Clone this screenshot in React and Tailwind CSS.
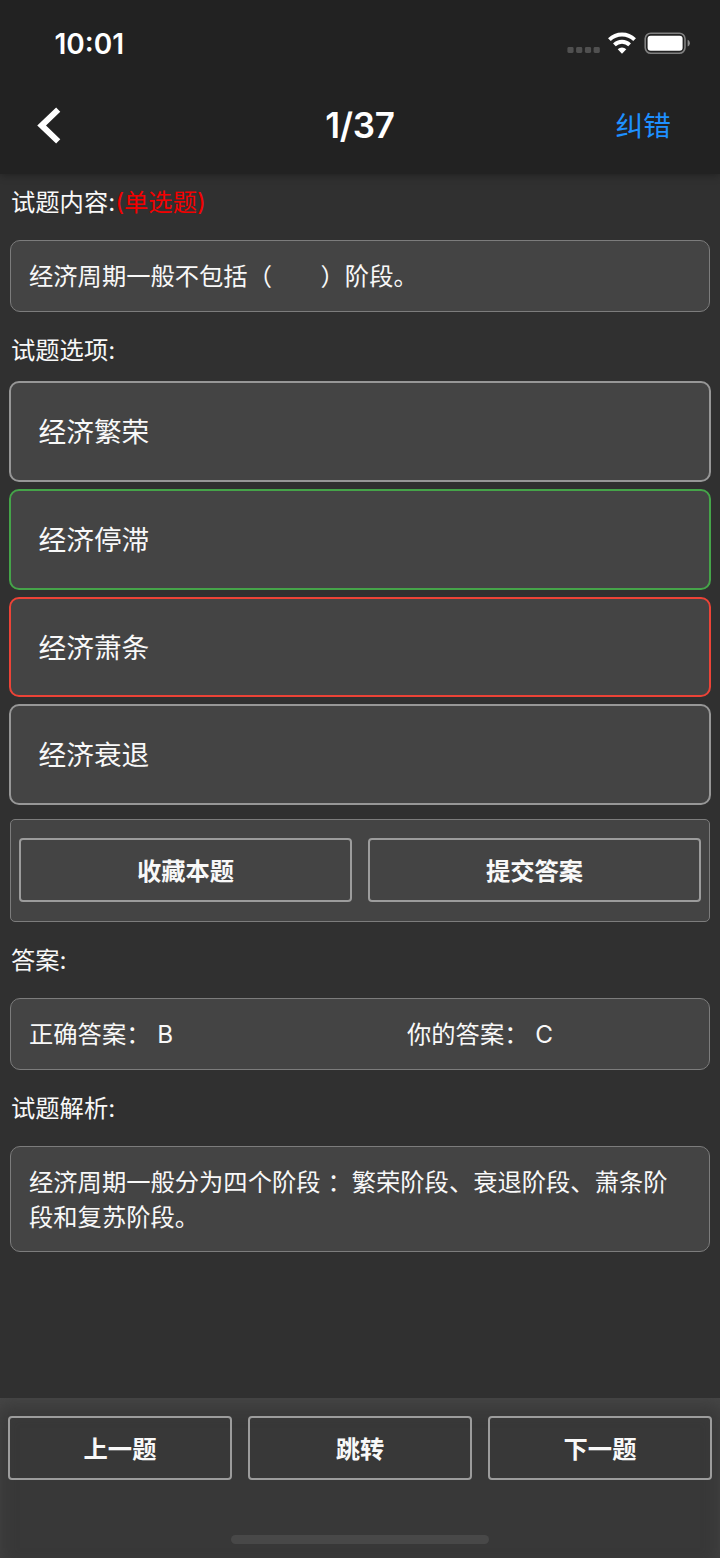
import { clsx } from 'clsx';

const options = [
    { id: 'A', text: '经济繁荣' },
    { id: 'B', text: '经济停滞' },
    { id: 'C', text: '经济萧条' },
    { id: 'D', text: '经济衰退' },
];

const correctAnswer = 'B';
const userAnswer = 'C';

function StatusBar() {
    return (
        <div className="flex h-[78px] items-start justify-between pr-[30px] pl-[54.5px]">
            <span className="mt-[24px] text-[28px] leading-[40px] font-semibold">10:01</span>
            <svg className="mt-[30px]" width="124" height="26" viewBox="0 0 124 26" fill="none">
                {/* No signal */}
                <g fill="#505050">
                    <rect x="1.4" y="17" width="6.2" height="6" rx="1.4" />
                    <rect x="10.1" y="17" width="6.2" height="6" rx="1.4" />
                    <rect x="18.9" y="17" width="6.2" height="6" rx="1.4" />
                    <rect x="27.6" y="17" width="6.2" height="6" rx="1.4" />
                </g>
                {/* Wifi */}
                <g stroke="#fff" strokeWidth="3.9">
                    <path d="M43.4 9.6a18.2 18.2 0 0 1 25.2 0" />
                    <path d="M48.4 14.9a10.9 10.9 0 0 1 15.2 0" />
                </g>
                <path d="M56 23.8l-4.3-4.6a6.2 6.2 0 0 1 8.6 0z" fill="#fff" />
                {/* Battery */}
                <rect x="79.2" y="3.2" width="39.8" height="20" rx="5.6" stroke="#808080" strokeWidth="1.6" />
                <rect x="81.6" y="5.8" width="35" height="15" rx="3" fill="#fff" />
                <path d="M121.6 9.8c3 1.2 3 5.6 0 6.8z" fill="#8c8c8c" />
            </svg>
        </div>
    );
}

function Label({ children, className }) {
    return <div className={clsx('pl-[11px] leading-[36px]', className)}>{children}</div>;
}

function Card({ children, className }) {
    return (
        <div className={clsx('mx-[10px] border-[1.5px] border-[#7c7c7c] bg-[#444444]', className)}>
            {children}
        </div>
    );
}

function OutlineButton({ children }) {
    return (
        <button className="h-[64px] flex-1 rounded-[4px] border-2 border-[#9c9c9c] pt-[2px] text-center font-bold">
            {children}
        </button>
    );
}

export default function App() {
    return (
        <div
            lang="zh-CN"
            className="flex h-[1558px] w-[720px] flex-col overflow-hidden bg-[#303030] font-['Inter','Noto_Sans_CJK_SC',sans-serif] text-[24.3px] text-[#f8f8f8]"
        >
            <header className="h-[174px] shrink-0 bg-[#222222] text-white shadow-[0_1px_8px_rgba(0,0,0,0.35)]">
                <StatusBar />
                <div className="grid h-[96px] grid-cols-3 items-center">
                    <svg className="ml-[36px]" width="28" height="40" viewBox="0 0 28 40" fill="none">
                        <path d="M22.2 3.7L5.6 19.5l16.6 15.8" stroke="#fff" strokeWidth="6" />
                    </svg>
                    <h1 className="pb-[2px] text-center text-[35px] font-semibold tracking-[-0.2px]">1/37</h1>
                    <button className="mr-[49px] justify-self-end pt-[2px] text-[27.7px] text-[#1e90ff]">纠错</button>
                </div>
            </header>

            <main className="flex-1">
                <Label className="mt-[10px]">
                    试题内容:<span className="text-[#f40000]">(单选题)</span>
                </Label>
                <Card className="mt-[20px] flex h-[72px] items-center rounded-[10px] pt-px pl-[18px]">
                    经济周期一般不包括（　　）阶段。
                </Card>

                <Label className="mt-[20px]">试题选项:</Label>
                <ul className="mx-[9px] mt-[13px] space-y-[7px]">
                    {options.map((option) => (
                        <li
                            key={option.id}
                            className={clsx(
                                'flex h-[100.75px] items-center rounded-[10px] border-2 bg-[#444444] pt-[3px] pl-[27.5px] text-[27.7px]',
                                option.id === correctAnswer ? 'border-[#45a449]' :
                                option.id === userAnswer ? 'border-[#ec4337]' :
                                'border-[#979797]'
                            )}
                        >
                            {option.text}
                        </li>
                    ))}
                </ul>

                <Card className="mt-[14px] flex h-[103px] gap-[16px] rounded-[5px] px-[8px] pt-[18px]">
                    <OutlineButton>收藏本题</OutlineButton>
                    <OutlineButton>提交答案</OutlineButton>
                </Card>

                <Label className="mt-[20px]">答案:</Label>
                <Card className="mt-[20px] flex h-[72px] items-center rounded-[10px] pl-[18px]">
                    <span className="w-[378px]">正确答案： {correctAnswer}</span>
                    <span>你的答案： {userAnswer}</span>
                </Card>

                <Label className="mt-[20px]">试题解析:</Label>
                <Card className="mt-[20px] h-[106px] rounded-[10px] pt-[18px] pr-[29px] pl-[18px] leading-[35px]">
                    经济周期一般分为四个阶段 ：繁荣阶段、衰退阶段、萧条阶段和复苏阶段。
                </Card>
            </main>

            <footer className="flex h-[160px] flex-col items-center justify-between bg-[#383838] pt-[18px] pb-[14px] shadow-[inset_0_10px_20px_-4px_rgba(76,76,76,0.8)]">
                <div className="flex w-full gap-[16px] px-[8px]">
                    <OutlineButton>上一题</OutlineButton>
                    <OutlineButton>跳转</OutlineButton>
                    <OutlineButton>下一题</OutlineButton>
                </div>
                <div className="h-[9px] w-[258px] rounded-full bg-[#484848]" />
            </footer>
        </div>
    );
}
